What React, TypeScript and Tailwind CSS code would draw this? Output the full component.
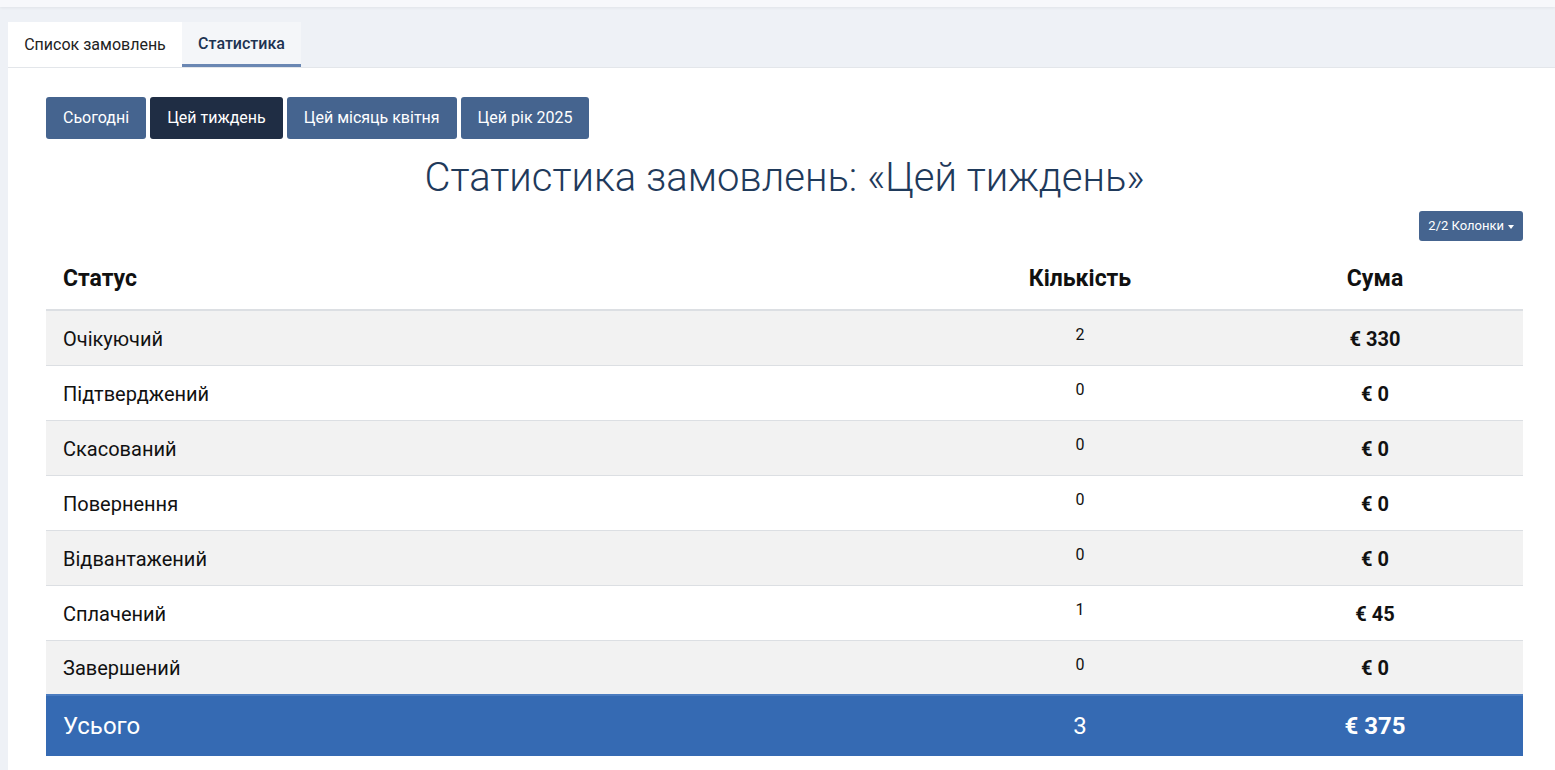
const periods = [
  { label: "Сьогодні", active: false },
  { label: "Цей тиждень", active: true },
  { label: "Цей місяць квітня", active: false },
  { label: "Цей рік 2025", active: false },
];

const rows = [
  { status: "Очікуючий", qty: 2, sum: "€ 330" },
  { status: "Підтверджений", qty: 0, sum: "€ 0" },
  { status: "Скасований", qty: 0, sum: "€ 0" },
  { status: "Повернення", qty: 0, sum: "€ 0" },
  { status: "Відвантажений", qty: 0, sum: "€ 0" },
  { status: "Сплачений", qty: 1, sum: "€ 45" },
  { status: "Завершений", qty: 0, sum: "€ 0" },
];

export default function App() {
  return (
    <div className="min-h-[770px] bg-[#eef1f6] font-['Roboto',sans-serif] text-[#111]">
      <div className="h-[7px] bg-[#f7f8fb] shadow-[0_1px_3px_rgba(0,0,0,0.06)]" />

      <div className="flex pl-2 pt-[15px]">
        <div className="flex h-[45px] w-[174px] items-center justify-center bg-white text-[16px] text-[#222]">
          Список замовлень
        </div>
        <div className="flex h-[45px] w-[119px] items-center justify-center border-b-[3px] border-[#6a87b3] bg-[#f4f6f9] pt-[2px] text-[16px] font-medium text-[#1d3352]">
          Статистика
        </div>
      </div>

      <div className="ml-2 min-h-[703px] border-t border-[#e3e6ea] bg-white pl-[38px] pr-[32px] pt-[29px] pb-3">
        <div className="flex gap-[4px]">
          {periods.map((p) => (
            <button
              key={p.label}
              className={`h-[42px] rounded-[3px] px-[17px] text-[16px] text-white ${
                p.active ? "bg-[#1f2d44]" : "bg-[#45648f]"
              }`}
            >
              {p.label}
            </button>
          ))}
        </div>

        <h1 className="mt-[15px] text-center text-[40px] font-light leading-[48px] text-[#1f3a5b]">
          Статистика замовлень: «Цей тиждень»
        </h1>

        <div className="mt-[9px] flex justify-end">
          <button className="flex h-[30px] items-center gap-[4px] rounded-[3px] bg-[#45648f] px-[9px] text-[13px] text-white">
            2/2 Колонки
            <span className="mt-[1px] h-0 w-0 border-x-[3px] border-t-[4px] border-x-transparent border-t-white" />
          </button>
        </div>

        <table className="mt-[9px] w-full border-collapse">
          <thead>
            <tr className="h-[60px] border-b-2 border-[#dcdfe3]">
              <th className="pl-[17px] text-left text-[23px] font-bold">Статус</th>
              <th className="w-[294px] text-center text-[23px] font-bold">Кількість</th>
              <th className="w-[296px] text-center text-[23px] font-bold">Сума</th>
            </tr>
          </thead>
          <tbody>
            {rows.map((r, i) => (
              <tr
                key={r.status}
                className={`h-[55px] border-b border-[#dcdfe3] ${i % 2 === 0 ? "bg-[#f2f2f2]" : "bg-white"}`}
              >
                <td className="pl-[17px] pt-[2px] text-[20px]">{r.status}</td>
                <td className="pb-[5px] text-center text-[16px]">{r.qty}</td>
                <td className="pt-[2px] text-center text-[20px] font-bold">{r.sum}</td>
              </tr>
            ))}
            <tr className="h-[61px] border-t-2 border-[#4b7cc0] bg-[#356ab3] text-white">
              <td className="pl-[17px] text-[24px]">Усього</td>
              <td className="text-center text-[24px]">3</td>
              <td className="text-center text-[24px] font-bold">€ 375</td>
            </tr>
          </tbody>
        </table>
      </div>
    </div>
  );
}
